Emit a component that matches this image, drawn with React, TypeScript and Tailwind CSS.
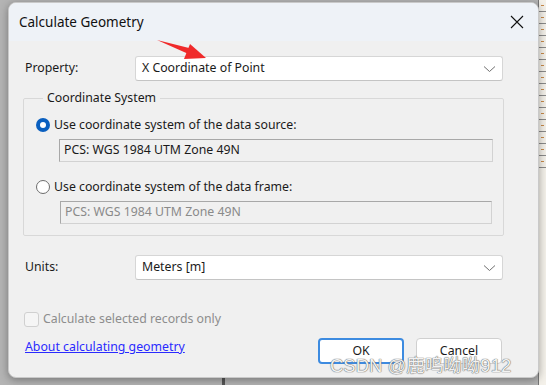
const font = "font-['Noto_Sans','Liberation_Sans',sans-serif]";

function Chevron() {
  return (
    <svg width="13" height="8" viewBox="0 0 13 8">
      <path d="M1 1.5 L6.5 6.5 L12 1.5" fill="none" stroke="#707070" strokeWidth="1" />
    </svg>
  );
}

function Select({ value }: { value: string }) {
  return (
    <div className="flex h-[25px] w-[368px] items-center justify-between rounded-[3px] border border-[#d6d6d6] border-b-[#c4c4c4] bg-white pl-[6px] pr-[6px] text-[12.3px] text-[#1a1a1a]">
      <span>{value}</span>
      <Chevron />
    </div>
  );
}

function Radio({ checked, label }: { checked?: boolean; label: string }) {
  return (
    <div className="flex h-[16px] items-center gap-[4px] text-[12.3px] text-[#1a1a1a]">
      {checked ? (
        <span className="flex h-[14px] w-[14px] items-center justify-center rounded-full bg-[#0a5fbf]">
          <span className="h-[6px] w-[6px] rounded-full bg-white" />
        </span>
      ) : (
        <span className="h-[14px] w-[14px] rounded-full border border-[#6d6d6d] bg-white" />
      )}
      <span>{label}</span>
    </div>
  );
}

function ReadBox({ text, dim }: { text: string; dim?: boolean }) {
  return (
    <div
      className={`flex h-[23px] items-center border border-[#d2d2d2] border-l-[#a8a8a8] border-t-[#a8a8a8] bg-[#f0f0f0] pl-[4px] text-[12.3px] ${
        dim ? "text-[#8a8a8a]" : "text-[#1a1a1a]"
      }`}
    >
      {text}
    </div>
  );
}

export default function App() {
  return (
    <div className={`relative h-[385px] w-[546px] overflow-hidden bg-[#b4b4b4] ${font}`}>
      {/* desktop behind */}
      <div className="absolute right-0 top-0 flex h-[385px] w-[8px] flex-col border-l border-[#777] bg-[#f4f1ea]">
        {Array.from({ length: 14 }).map((_, i) => (
          <div key={i} className="flex h-[12px] items-center border-b border-[#8a8a8a] pl-[2px]">
            <span className="h-[1px] w-[3px] bg-[#c98a4a]" />
          </div>
        ))}
      </div>
      <div className="absolute bottom-0 left-[222px] h-[8px] w-[3px] bg-[#555]" />

      <div className="relative ml-[8px] mt-[2px] h-[376px] w-[531px] overflow-hidden rounded-[8px] border border-[#c9c9c9] bg-[#f0f0f0] shadow-[0_2px_8px_rgba(0,0,0,0.35)]">
        {/* title bar */}
        <div className="flex h-[38px] items-center justify-between bg-[#eef2f7] pl-[10px] pr-[13px]">
          <span className="text-[13.5px] text-[#111]">Calculate Geometry</span>
          <svg width="14" height="14" viewBox="0 0 14 14" className="mr-[1px]">
            <path d="M1 1 L13 13 M13 1 L1 13" stroke="#111" strokeWidth="1.1" />
          </svg>
        </div>

        <div className="pl-[14px] pt-[15px]">
          <div className="flex items-center">
            <span className="w-[112px] pl-[2px] text-[12.3px] text-[#1a1a1a]">Property:</span>
            <Select value="X Coordinate of Point" />
          </div>

          <fieldset className="mt-[9px] w-[481px] rounded-[2px] border border-[#d8d8d8] pb-[11px] pl-[12px] pr-[10px]">
            <legend className="ml-[7px] px-[4px] text-[12.3px] leading-[16px] text-[#1a1a1a]">
              Coordinate System
            </legend>
            <div className="mt-[11px]">
              <Radio checked label="Use coordinate system of the data source:" />
            </div>
            <div className="ml-[23px] mt-[6px]">
              <ReadBox text="PCS: WGS 1984 UTM Zone 49N" />
            </div>
            <div className="mt-[17px]">
              <Radio label="Use coordinate system of the data frame:" />
            </div>
            <div className="ml-[24px] mr-[1px] mt-[6px]">
              <ReadBox text="PCS: WGS 1984 UTM Zone 49N" dim />
            </div>
          </fieldset>

          <div className="mt-[19px] flex items-center">
            <span className="w-[112px] pl-[2px] text-[12.3px] text-[#1a1a1a]">Units:</span>
            <Select value="Meters [m]" />
          </div>

          <div className="ml-[1px] mt-[31px] flex h-[16px] items-center gap-[4px] text-[12.3px] leading-[16px] text-[#8d8d8d]">
            <span className="h-[15px] w-[15px] rounded-[3px] border border-[#d0d0d0] bg-[#f5f5f5]" />
            <span>Calculate selected records only</span>
          </div>

          <div className="mt-[11px] flex items-start">
            <span className="ml-[2px] mt-[1px] w-[293px] text-[12.3px] leading-[16px] text-[#2a2aff] underline">
              About calculating geometry
            </span>
            <button className="h-[26px] w-[86px] rounded-[4px] border-2 border-[#3d8be0] bg-white text-[12.3px] text-[#1a1a1a]">
              OK
            </button>
            <button className="ml-[12px] h-[26px] w-[86px] rounded-[4px] border border-[#d0d0d0] bg-white text-[12.3px] text-[#1a1a1a]">
              Cancel
            </button>
          </div>
        </div>

        {/* red annotation arrow */}
        <svg className="absolute left-[132px] top-[32px]" width="72" height="28" viewBox="0 0 72 28">
          <path d="M16 5 L50 13.5 L47.5 19 Z" fill="#f02a2a" />
          <path d="M65 23 L49 9 L43 24 Z" fill="#f02a2a" />
        </svg>
      </div>

      {/* watermark */}
      <span className="absolute left-[330px] top-[354px] font-['Liberation_Sans','Noto_Sans_CJK_SC',sans-serif] text-[18.5px] leading-[24px] text-[#f2f2f2] [text-shadow:0_0_1px_#5a5a5a,0_0_1px_#5a5a5a]">
        CSDN @鹿鸣呦呦912
      </span>
    </div>
  );
}
